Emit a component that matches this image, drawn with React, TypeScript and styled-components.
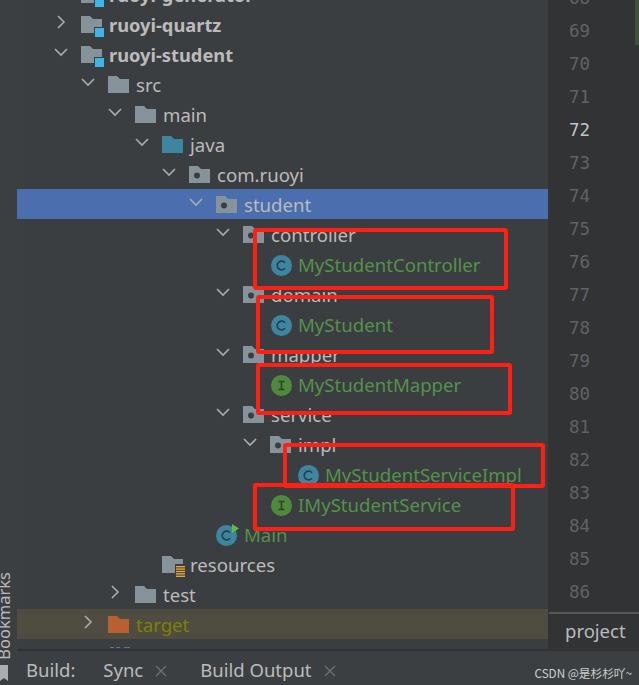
import React from 'react';
import styled, { createGlobalStyle } from 'styled-components';

const GlobalStyle = createGlobalStyle`
  html, body {
    margin: 0;
    padding: 0;
    background: #3c3f41;
  }
`;

const Window = styled.div`
  position: relative;
  width: 639px;
  height: 685px;
  overflow: hidden;
  display: flex;
  font-family: "Noto Sans", "Open Sans", sans-serif;
  color: #bbbbbb;
`;

const SideStripe = styled.div`
  width: 17px;
  flex: none;
  background: #3c3f41;
  display: flex;
  flex-direction: column;
  justify-content: flex-end;
`;

const SideLabel = styled.span`
  writing-mode: vertical-rl;
  transform: rotate(180deg);
  font-size: 16.5px;
  line-height: 17px;
  width: 17px;
  margin-left: -5px;
  margin-bottom: 5px;
`;

const BookmarkGlyph = styled.svg`
  flex: none;
  margin-bottom: 3px;
`;

const Content = styled.div`
  flex: 1;
  display: flex;
  flex-direction: column;
`;

const Main = styled.div`
  display: flex;
  height: 649px;
  overflow: hidden;
`;

const TreePanel = styled.div`
  width: 531px;
  flex: none;
  background: #3b3e41;
  overflow: hidden;
`;

const TreeList = styled.div`
  margin-top: -21px;
`;

const Row = styled.div<{ $level: number; $tone?: 'selected' | 'excluded' }>`
  height: 30px;
  display: flex;
  align-items: center;
  padding-left: ${({ $level }) => 34 + $level * 27}px;
  background: ${({ $tone }) =>
    $tone === 'selected' ? '#4b6eaf' : $tone === 'excluded' ? '#4f4c41' : 'transparent'};
`;

const Arrow = styled.span`
  width: 20px;
  height: 20px;
  margin-right: 10px;
  margin-bottom: 4px;
  flex: none;
  display: flex;
  align-items: center;
  justify-content: center;
`;

const IconBox = styled.span`
  width: 22px;
  height: 22px;
  margin-right: 6px;
  flex: none;
  display: block;

  svg {
    display: block;
    overflow: visible;
  }
`;

const Label = styled.span<{ $bold?: boolean; $color?: string }>`
  font-size: ${({ $bold }) => ($bold ? 18.3 : 18.6)}px;
  line-height: 30px;
  margin-top: 2px;
  white-space: nowrap;
  font-weight: ${({ $bold }) => ($bold ? 700 : 400)};
  color: ${({ $color }) => $color ?? '#bbbbbb'};
`;

const Gutter = styled.div`
  flex: 1;
  background: #313335;
  display: flex;
  flex-direction: column;
  position: relative;
`;

const Numbers = styled.div`
  flex: 1;
  overflow: hidden;
  padding-left: 21px;
  font-family: "DejaVu Sans Mono", monospace;
  font-size: 17.5px;
  color: #606366;
`;

const NumberList = styled.div`
  margin-top: -18px;
`;

const LineNumber = styled.div<{ $active?: boolean }>`
  height: 33px;
  line-height: 33px;
  color: ${({ $active }) => ($active ? '#c4c4c4' : '#606366')};
`;

const ChangeMark = styled.div`
  position: absolute;
  top: 0;
  right: 0;
  width: 4px;
  height: 45px;
  background: #3f5239;
`;

const ProjectTab = styled.div`
  height: 35px;
  flex: none;
  margin-left: 1px;
  border-top: 2px solid #555759;
  font-size: 18.5px;
  line-height: 34px;
  padding-left: 16px;
`;

const BottomBar = styled.div`
  flex: 1;
  background: #3c3f41;
  border-top: 2px solid #323232;
  display: flex;
  align-items: center;
  padding-left: 9px;
  padding-top: 2px;
  font-size: 18.5px;
`;

const BuildLabel = styled.span`
  margin-right: 28px;
`;

const BarTab = styled.span`
  display: flex;
  align-items: center;
  gap: 12px;
  margin-right: 33px;

  svg {
    margin-top: 4px;
  }
`;

const Watermark = styled.span`
  position: absolute;
  right: 7px;
  bottom: 4px;
  font-family: "Noto Sans CJK SC", "DejaVu Sans", sans-serif;
  font-size: 11.7px;
  line-height: 16px;
  color: #d0d0d0;
`;

const RedBox = styled.div<{ $x: number; $y: number; $w: number; $h: number }>`
  position: absolute;
  left: ${({ $x }) => $x}px;
  top: ${({ $y }) => $y}px;
  width: ${({ $w }) => $w}px;
  height: ${({ $h }) => $h}px;
  box-sizing: border-box;
  border: 4px solid #ff2015;
  border-radius: 3px;
`;

type IconKind =
  | 'module'
  | 'folder'
  | 'source'
  | 'package'
  | 'class'
  | 'interface'
  | 'main'
  | 'resources'
  | 'excluded'
  | 'pom';

const FolderShape: React.FC<{ fill: string }> = ({ fill }) => (
  <path d="M0 3h9l3 3h9v14H0z" fill={fill} />
);

const FileIcon: React.FC<{ kind: IconKind }> = ({ kind }) => {
  const box = { width: 22, height: 22, viewBox: '0 0 22 22' };
  if (kind === 'folder') {
    return <svg {...box}><FolderShape fill="#87939a" /></svg>;
  }
  if (kind === 'source') {
    return <svg {...box}><FolderShape fill="#3e86a0" /></svg>;
  }
  if (kind === 'excluded') {
    return <svg {...box}><FolderShape fill="#b8602f" /></svg>;
  }
  if (kind === 'pom') {
    return (
      <svg {...box}>
        <path d="M2 4.5h4M8 4.5h4M16 4.5h6" stroke="#3e7f9e" strokeWidth="1" fill="none" />
      </svg>
    );
  }
  if (kind === 'package') {
    return (
      <svg {...box}>
        <FolderShape fill="#87939a" />
        <circle cx="8" cy="12.5" r="3" fill="#3b3e41" />
      </svg>
    );
  }
  if (kind === 'module') {
    return (
      <svg {...box}>
        <FolderShape fill="#87939a" />
        <rect x="13" y="14" width="10" height="10" fill="#3b3e41" />
        <rect x="14" y="15" width="9" height="9" fill="#3db5e6" />
      </svg>
    );
  }
  if (kind === 'resources') {
    return (
      <svg {...box}>
        <FolderShape fill="#87939a" />
        <rect x="13" y="11" width="10" height="14" fill="#3b3e41" />
        {[13, 15.4, 17.8, 20.2, 22.6].map((y) => (
          <rect key={y} x="14" y={y} width="9" height="1.4" fill="#eaa53b" />
        ))}
      </svg>
    );
  }
  if (kind === 'interface') {
    return (
      <svg {...box}>
        <circle cx="11.5" cy="12.5" r="10.5" fill="#4f8a3c" />
        <path d="M8.5 8.5h6M8.5 16.5h6M11.5 8.5v8" stroke="#2f3f2c" strokeWidth="1.6" fill="none" />
      </svg>
    );
  }
  if (kind === 'main') {
    return (
      <svg {...box}>
        <circle cx="10.5" cy="12.5" r="10.5" fill="#3e86a0" />
        <path d="M14 9.7a4.4 4.4 0 1 0 0 5.6" stroke="#27404b" strokeWidth="1.7" fill="none" />
        <path d="M16 1l7 4.5-7 4.5z" fill="#5fb83f" />
      </svg>
    );
  }
  return (
    <svg {...box}>
      <circle cx="11.5" cy="12.5" r="10.5" fill="#3e86a0" />
      <path d="M15 9.7a4.4 4.4 0 1 0 0 5.6" stroke="#27404b" strokeWidth="1.7" fill="none" />
    </svg>
  );
};

const ChevronIcon: React.FC<{ open: boolean }> = ({ open }) => (
  <svg width="14" height="14" viewBox="0 0 14 14" fill="none" stroke="#a9adb0" strokeWidth="1.6">
    {open ? <path d="M1 4l6 6 6-6" /> : <path d="M4 1l6 6-6 6" />}
  </svg>
);

const CloseIcon: React.FC = () => (
  <svg width="12" height="12" viewBox="0 0 12 12" stroke="#6e7173" strokeWidth="1.3">
    <path d="M1 1l10 10M11 1L1 11" />
  </svg>
);

interface TreeItem {
  label: string;
  level: number;
  icon: IconKind;
  open?: boolean;
  bold?: boolean;
  color?: string;
  tone?: 'selected' | 'excluded';
}

const GREEN = '#54924a';

const items: TreeItem[] = [
  { label: 'ruoyi-generator', level: 0, icon: 'module', open: false, bold: true },
  { label: 'ruoyi-quartz', level: 0, icon: 'module', open: false, bold: true },
  { label: 'ruoyi-student', level: 0, icon: 'module', open: true, bold: true },
  { label: 'src', level: 1, icon: 'folder', open: true },
  { label: 'main', level: 2, icon: 'folder', open: true },
  { label: 'java', level: 3, icon: 'source', open: true },
  { label: 'com.ruoyi', level: 4, icon: 'package', open: true },
  { label: 'student', level: 5, icon: 'package', open: true, tone: 'selected' },
  { label: 'controller', level: 6, icon: 'package', open: true },
  { label: 'MyStudentController', level: 7, icon: 'class', color: GREEN },
  { label: 'domain', level: 6, icon: 'package', open: true },
  { label: 'MyStudent', level: 7, icon: 'class', color: GREEN },
  { label: 'mapper', level: 6, icon: 'package', open: true },
  { label: 'MyStudentMapper', level: 7, icon: 'interface', color: GREEN },
  { label: 'service', level: 6, icon: 'package', open: true },
  { label: 'impl', level: 7, icon: 'package', open: true },
  { label: 'MyStudentServiceImpl', level: 8, icon: 'class', color: GREEN },
  { label: 'IMyStudentService', level: 7, icon: 'interface', color: GREEN },
  { label: 'Main', level: 5, icon: 'main', color: GREEN },
  { label: 'resources', level: 3, icon: 'resources' },
  { label: 'test', level: 2, icon: 'folder', open: false },
  { label: 'target', level: 1, icon: 'excluded', open: false, color: '#808000', tone: 'excluded' },
  // only the top edge of this row's icon shows above the build bar
  { label: '', level: 1, icon: 'pom' },
];

const lineNumbers = Array.from({ length: 19 }, (_, i) => 68 + i);

const redBoxes = [
  { x: 253, y: 228, w: 255, h: 62 },
  { x: 256, y: 295, w: 238, h: 59 },
  { x: 256, y: 363, w: 256, h: 52 },
  { x: 283, y: 443, w: 262, h: 45 },
  { x: 253, y: 483, w: 262, h: 48 },
];

const App: React.FC = () => {
  return (
    <Window>
      <GlobalStyle />
      <SideStripe>
        <SideLabel>Bookmarks</SideLabel>
        <BookmarkGlyph width="9" height="17" viewBox="0 0 9 17">
          <path d="M0 0h8v16L4 13 0 16z" fill="#a9adb0" />
        </BookmarkGlyph>
      </SideStripe>
      <Content>
        <Main>
          <TreePanel>
            <TreeList>
              {items.map((item) => (
                <Row key={item.label} $level={item.level} $tone={item.tone}>
                  <Arrow>{item.open !== undefined && <ChevronIcon open={item.open} />}</Arrow>
                  <IconBox>
                    <FileIcon kind={item.icon} />
                  </IconBox>
                  <Label $bold={item.bold} $color={item.color}>
                    {item.label}
                  </Label>
                </Row>
              ))}
            </TreeList>
          </TreePanel>
          <Gutter>
            <ChangeMark />
            <Numbers>
              <NumberList>
                {lineNumbers.map((n) => (
                  <LineNumber key={n} $active={n === 72}>
                    {n}
                  </LineNumber>
                ))}
              </NumberList>
            </Numbers>
            <ProjectTab>project</ProjectTab>
          </Gutter>
        </Main>
        <BottomBar>
          <BuildLabel>Build:</BuildLabel>
          <BarTab>
            Sync
            <CloseIcon />
          </BarTab>
          <BarTab>
            Build Output
            <CloseIcon />
          </BarTab>
        </BottomBar>
      </Content>
      {redBoxes.map((b) => (
        <RedBox key={b.x + b.y} $x={b.x} $y={b.y} $w={b.w} $h={b.h} />
      ))}
      <Watermark>CSDN @是杉杉吖~</Watermark>
    </Window>
  );
};

export default App;
